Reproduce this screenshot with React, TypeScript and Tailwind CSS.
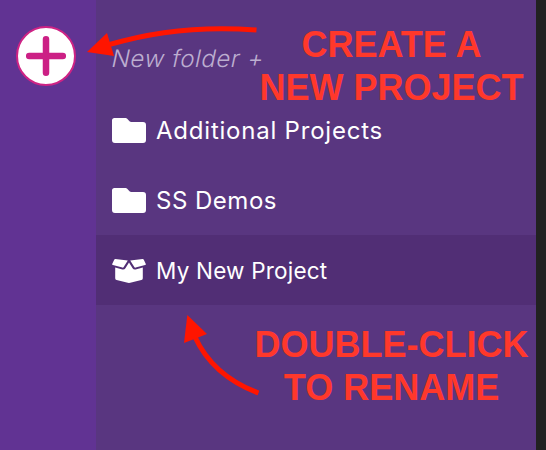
import type { ReactNode } from 'react'

function FolderIcon() {
	return (
		<svg className="h-[25px] w-[34px]" viewBox="0 0 34 25" fill="#fff">
			<path d="M2.5 0H13.5Q14.5 0 15.2 .8L17.5 3.2Q18.2 4 19.3 4H31Q34 4 34 7V22Q34 25 31 25H3Q0 25 0 22V2.5Q0 0 2.5 0Z" />
		</svg>
	)
}

function BoxIcon() {
	return (
		<svg className="mt-px h-[24px] w-[34px]" viewBox="0 0 34 24" fill="#fff">
			<path d="M3.4 .1L15.8 1.6L11.7 8.1Q11.2 8.8 10.4 8.6L.9 6.1Q-.1 5.8 .2 4.9L2.2 .8Q2.6 0 3.4 .1Z" />
			<path d="M30.6 .1L18.2 1.6L22.3 8.1Q22.8 8.8 23.6 8.6L33.1 6.1Q34.1 5.8 33.8 4.9L31.8 .8Q31.4 0 30.6 .1Z" />
			<path d="M3.2 8.6L10.4 10.5Q12.4 10.9 13.4 9.3L17 3.5L20.6 9.3Q21.6 10.9 23.6 10.5L30.8 8.6V19.3Q30.8 20.7 29.4 21L18.2 23.8Q17 24.1 15.8 23.8L4.6 21Q3.2 20.7 3.2 19.3Z" />
		</svg>
	)
}

interface IRow {
	icon: ReactNode
	label: string
	className: string
	labelClassName: string
}

const rows: IRow[] = [
	{ icon: <FolderIcon />, label: 'Additional Projects', className: '', labelClassName: 'text-[24px] tracking-[0.78px]' },
	{ icon: <FolderIcon />, label: 'SS Demos', className: '', labelClassName: 'text-[24px] tracking-[0.5px]' },
	{ icon: <BoxIcon />, label: 'My New Project', className: 'bg-[#512e75]', labelClassName: 'text-[22.5px] tracking-[0.2px]' },
]

function App() {
	return (
		<div className="relative flex h-[450px] w-[546px] overflow-hidden bg-[#212121] font-['Inter',sans-serif]">
			<aside className="w-24 shrink-0 bg-[#613393] pt-[26px] pl-4">
				<button type="button" aria-label="Create project" className="block size-[60px]">
					<svg className="size-[60px]" viewBox="0 0 60 60">
						<circle cx="30" cy="30" r="29" fill="#fff" stroke="#cf2385" strokeWidth="2" />
						<path d="M30 13.2V46.8M13.2 30H46.8" fill="none" stroke="#cc2085" strokeWidth="6.5" strokeLinecap="round" />
					</svg>
				</button>
			</aside>

			<main className="w-[440px] shrink-0 bg-[#593680]">
				<div className="flex h-[95px] items-start pt-[43px] pl-4">
					<span className="-skew-x-12 text-[24px] leading-8 font-light tracking-[0.6px] whitespace-nowrap text-[#bdaed0]">New folder +</span>
				</div>
				{rows.map((row) => (
					<div key={row.label} className={`flex h-[70px] items-center gap-2.5 pl-4 ${row.className}`}>
						{row.icon}
						<span className={`pt-0.5 whitespace-nowrap text-white ${row.labelClassName}`}>{row.label}</span>
					</div>
				))}
			</main>

			<svg className="absolute inset-0 h-[450px] w-[546px]" viewBox="0 0 546 450" fill="none">
				<path d="M256.5 30Q178 24 109 44.7" stroke="#ff1500" strokeWidth="5" />
				<path d="M87 52L107 33L114 56Z" fill="#ff1500" />
				<path d="M258.5 393Q213 376 195 337" stroke="#ff1500" strokeWidth="5" />
				<path d="M187.3 315L207 334L184 343Z" fill="#ff1500" />
			</svg>

			<p className="absolute top-[23px] left-[241.5px] w-[300px] text-center font-['Liberation_Sans',sans-serif] text-[36px] leading-[43px] font-bold text-[#ff382b]">
				CREATE A
				<br />
				NEW PROJECT
			</p>
			<p className="absolute top-[323px] left-[241.5px] w-[300px] text-center font-['Liberation_Sans',sans-serif] text-[36px] leading-[43px] font-bold text-[#ff382b]">
				DOUBLE-CLICK
				<br />
				TO RENAME
			</p>
		</div>
	)
}

export default App
